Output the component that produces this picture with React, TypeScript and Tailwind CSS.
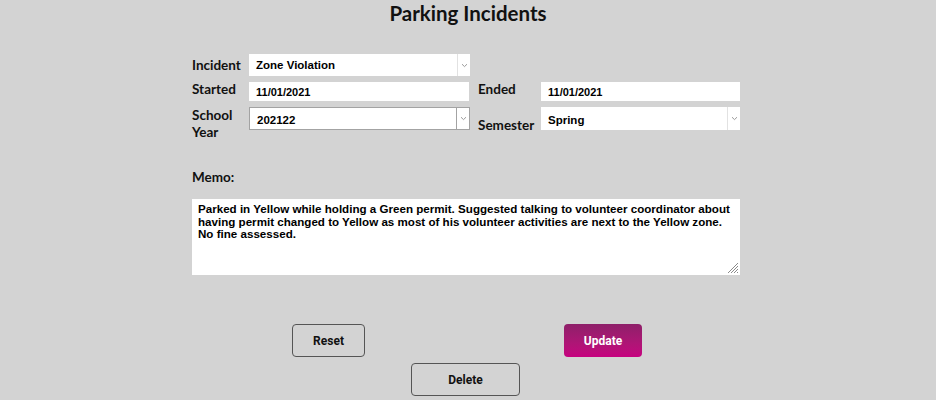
import React from 'react';

const labelFont = { fontFamily: 'Lato, "DejaVu Sans", sans-serif' };
const fieldFont = { fontFamily: '"Liberation Sans", Arial, sans-serif' };

function Chevron() {
  return (
    <svg width="7" height="5" viewBox="0 0 7 5" className="text-[#9a9a9a]">
      <path d="M1 1.2 L3.5 3.6 L6 1.2" fill="none" stroke="currentColor" strokeWidth="1" />
    </svg>
  );
}

function SelectBox({
  value,
  framed,
  className,
  textClass,
}: {
  value: string;
  framed?: boolean;
  className?: string;
  textClass?: string;
}) {
  return (
    <div
      className={`flex items-stretch bg-white ${framed ? 'border border-[#a3a3a3]' : ''} ${className ?? ''}`}
      style={fieldFont}
    >
      <span className={`flex flex-1 items-center pl-[7px] text-[11.5px] font-bold text-black ${textClass ?? ''}`}>
        {value}
      </span>
      <span
        className={`flex w-[13px] items-center justify-center border-l ${
          framed ? 'border-[#a3a3a3]' : 'border-[#e2e2e2]'
        }`}
      >
        <Chevron />
      </span>
    </div>
  );
}

function TextBox({ value, className }: { value: string; className?: string }) {
  return (
    <div
      className={`flex items-center bg-white pt-[1px] pl-[7px] text-[11px] font-bold text-black ${className ?? ''}`}
      style={fieldFont}
    >
      {value}
    </div>
  );
}

export default function App() {
  return (
    <div className="min-h-screen w-full bg-[#d3d3d3]">
      <h1 className="pt-[2px] text-center text-[20.5px] leading-[22px] font-bold text-[#111]" style={labelFont}>
        Parking Incidents
      </h1>

      <div className="ml-[192px] w-[548px] pt-[30px]">
        <div className="grid grid-cols-[57px_221px_8px_63px_199px] gap-y-[6px]">
          {/* row 1 */}
          <div className="flex items-center text-[13.5px] font-bold text-[#111]" style={labelFont}>
            Incident
          </div>
          <SelectBox value="Zone Violation" className="h-[22px]" textClass="pt-[2px]" />
          <div />
          <div />
          <div />

          {/* row 2 */}
          <div className="-mt-[1px] text-[13.5px] leading-[16px] font-bold text-[#111]" style={labelFont}>
            Started
          </div>
          <TextBox value="11/01/2021" className="mr-[1px] h-[19px]" />
          <div />
          <div className="-mt-[1px] text-[13.5px] leading-[16px] font-bold text-[#111]" style={labelFont}>
            Ended
          </div>
          <TextBox value="11/01/2021" className="h-[19px]" />

          {/* row 3 */}
          <div className="text-[13.5px] leading-[17px] font-bold text-[#111]" style={labelFont}>
            School
            <br />
            Year
          </div>
          <SelectBox value="202122" framed className="h-[23px] self-start" textClass="pt-[4px]" />
          <div />
          <div className="flex items-center pt-[3px] text-[13.5px] font-bold text-[#111]" style={labelFont}>
            Semester
          </div>
          <SelectBox value="Spring" className="h-[23px] self-start" textClass="pt-[4px]" />
        </div>

        <div className="mt-[28px] text-[13.5px] leading-[16px] font-bold text-[#111]" style={labelFont}>
          Memo:
        </div>

        <div className="relative mt-[14px] h-[76px] w-[548px] bg-white">
          <p
            className="px-[6px] pt-[4px] text-[11.6px] leading-[12.5px] font-bold text-black"
            style={fieldFont}
          >
            Parked in Yellow while holding a Green permit. Suggested talking to volunteer coordinator about having
            permit changed to Yellow as most of his volunteer activities are next to the Yellow zone. No fine
            assessed.
          </p>
          <svg width="12" height="12" viewBox="0 0 12 12" className="absolute right-[1px] bottom-[1px] text-[#8a8a8a]">
            <path d="M11 1 L1 11 M11 4 L4 11 M11 7 L7 11 M11 10 L10 11" stroke="currentColor" strokeWidth="1" />
          </svg>
        </div>
      </div>

      <div
        className="mt-[49px] ml-[292px] flex w-[350px] justify-between"
        style={{ fontFamily: 'Roboto, "Liberation Sans", sans-serif' }}
      >
        <button className="h-[33px] w-[73px] rounded-[4px] border border-[#555] text-[12px] font-bold text-[#111]">
          Reset
        </button>
        <button className="h-[33px] w-[78px] rounded-[4px] bg-gradient-to-b from-[#8e1f69] to-[#c6007f] text-[12px] font-bold text-white">
          Update
        </button>
      </div>
      <div className="mt-[6px] ml-[411px]" style={{ fontFamily: 'Roboto, "Liberation Sans", sans-serif' }}>
        <button className="h-[33px] w-[109px] rounded-[4px] border border-[#555] text-[12px] font-bold text-[#111]">
          Delete
        </button>
      </div>
    </div>
  );
}
